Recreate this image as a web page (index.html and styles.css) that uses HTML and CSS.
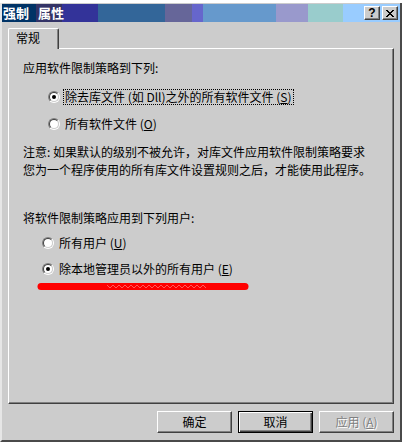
FILE: index.html
```html
<!DOCTYPE html>
<html lang="zh-CN">
<head>
<meta charset="utf-8">
<title>强制 属性</title>
<link rel="stylesheet" href="styles.css">
</head>
<body>
<div class="window">
  <div class="titlebar">
    <span class="title"><span class="t1">强制</span><span class="t2">属性</span></span>
    <div class="tbtns">
      <span class="tbtn help">?</span>
      <span class="tbtn close"><svg width="8" height="7" viewBox="0 0 8 7" shape-rendering="crispEdges"><path d="M0 0h2v1h-2zM6 0h2v1h-2zM1 1h2v1h-2zM5 1h2v1h-2zM2 2h4v1h-4zM3 3h2v1h-2zM2 4h4v1h-4zM1 5h2v1h-2zM5 5h2v1h-2zM0 6h2v1h-2zM6 6h2v1h-2z" fill="#000"/></svg></span>
    </div>
  </div>
  <div class="client">
    <div class="tabs"><div class="tab">常规</div></div>
    <div class="panel">
      <p class="text h1">应用软件限制策略到下列:</p>
      <div class="row g1 r1"><span class="radio checked"><span class="inner"></span></span><span class="lbl focus">除去库文件 (如 Dll)之外的所有软件文件 (<u>S</u>)</span></div>
      <div class="row g1 r2"><span class="radio"><span class="inner"></span></span><span class="lbl">所有软件文件 (<u>O</u>)</span></div>
      <div class="note">
        <p class="text nl">注意: 如果默认的级别不被允许，对库文件应用软件限制策略要求</p>
        <p class="text nl">您为一个程序使用的所有库文件设置规则之后，才能使用此程序。</p>
      </div>
      <p class="text h2">将软件限制策略应用到下列用户:</p>
      <div class="row g2 r3"><span class="radio"><span class="inner"></span></span><span class="lbl">所有用户 (<u>U</u>)</span></div>
      <div class="row g2 r4"><span class="radio checked"><span class="inner"></span></span><span class="lbl">除本地管理员以外的所有用户 (<u>E</u>)</span></div>
      <svg class="scribble" width="212" height="9" viewBox="0 0 212 9">
        <path d="M4 4.5 L208 4.5" stroke="#ff0000" stroke-width="7" stroke-linecap="round"/>
        <path d="M70 3 l3 3 l3 -3 l3 3 l3 -3 l3 3 l3 -3 l3 3 l3 -3 l3 3 l3 -3 l3 3 l3 -3 l3 3 l3 -3 l3 3 l3 -3 l3 3 l3 -3 l3 3 l3 -3 l3 3 l3 -3 l3 3 l3 -3 l3 3 l3 -3 l3 3 l3 -3 l3 3 l3 -3 l3 3 l3 -3 l3 3" stroke="#ff8080" stroke-width="0.7" fill="none"/>
      </svg>
    </div>
    <div class="buttons">
      <span class="btn">确定</span>
      <span class="btn default">取消</span>
      <span class="btn disabled">应用 (<u>A</u>)</span>
    </div>
  </div>
</div>
</body>
</html>
```
FILE: styles.css
```css
html, body {
  margin: 0;
  padding: 0;
  background: #ffffff;
}
body {
  font-family: "Noto Sans CJK SC", "Noto Sans", sans-serif;
  font-size: 12px;
  color: #000;
}
.window {
  margin-top: 3px;
  width: 402px;
  height: 439px;
  box-sizing: border-box;
  background: #cccccc;
  border-left: 2px solid #e6e6e6;
  border-right: 2px solid #4a4a4a;
  border-bottom: 2px solid #4a4a4a;
  padding-top: 1px;
  display: flex;
  flex-direction: column;
}
.titlebar {
  height: 18px;
  display: flex;
  align-items: center;
  justify-content: space-between;
  background: linear-gradient(to right,
    #003366 0, #003366 34px,
    #333366 34px, #333366 60px,
    #333399 60px, #333399 96px,
    #336699 96px, #336699 163px,
    #666699 163px, #666699 190px,
    #6666cc 190px, #6666cc 201px,
    #6699cc 201px, #6699cc 274px,
    #9999cc 274px, #9999cc 306px,
    #99cccc 306px, #99cccc 341px,
    #99ccff 341px, #99ccff 100%);
}
.title {
  display: flex;
  height: 18px;
  align-items: center;
  color: #fff;
  font-weight: bold;
  font-size: 13px;
  line-height: 18px;
}
.t1 {
  padding-left: 1px;
  width: 33px;
}
.t2 {
  padding-left: 2px;
}
.tbtns {
  display: flex;
  gap: 2px;
  padding-right: 2px;
}
.tbtn {
  width: 16px;
  height: 14px;
  box-sizing: border-box;
  background: #cccccc;
  border-style: solid;
  border-width: 1px;
  border-color: #ffffff #404040 #404040 #ffffff;
  box-shadow: inset -1px -1px #808080;
  display: flex;
  align-items: center;
  justify-content: center;
}
.help {
  font-family: "Liberation Sans", sans-serif;
  font-weight: bold;
  font-size: 12px;
  line-height: 12px;
}
.client {
  padding: 6px 0 0 6px;
  display: flex;
  flex-direction: column;
}
.tabs {
  display: flex;
  height: 20px;
}
.tab {
  position: relative;
  z-index: 1;
  width: 51px;
  height: 21px;
  box-sizing: border-box;
  background: #cccccc;
  border-top: 1px solid #ffffff;
  border-left: 1px solid #ffffff;
  border-right: 1px solid #404040;
  box-shadow: inset -1px 0 #808080;
  border-top-left-radius: 2px;
  border-top-right-radius: 2px;
  padding-left: 7px;
  line-height: 17px;
  font-size: 12px;
}
.panel {
  width: 386px;
  height: 356px;
  box-sizing: border-box;
  border-style: solid;
  border-width: 1px;
  border-color: #ffffff #404040 #404040 #ffffff;
  box-shadow: inset -1px -1px #808080;
  padding-left: 14px;
  display: flex;
  flex-direction: column;
  align-items: flex-start;
}
.text {
  margin: 0;
  line-height: 12px;
  white-space: nowrap;
}
.h1 { margin-top: 13px; }
.note {
  margin-top: 12px;
  display: flex;
  flex-direction: column;
}
.nl {
  line-height: 18px;
  height: 18px;
}
.h2 { margin-top: 33px; }
.row {
  display: flex;
  align-items: center;
  height: 14px;
  gap: 4px;
  white-space: nowrap;
  line-height: 12px;
}
.g1 { margin-left: 25px; }
.g2 { margin-left: 19px; }
.r1 { margin-top: 16px; }
.r2 { margin-top: 13px; }
.r3 { margin-top: 12px; }
.r4 { margin-top: 12px; }
.radio {
  width: 12px;
  height: 12px;
  box-sizing: border-box;
  border-radius: 50%;
  border-style: solid;
  border-width: 1px;
  border-color: #808080 #ffffff #ffffff #808080;
  display: flex;
}
.radio .inner {
  flex: 1;
  border-radius: 50%;
  border-style: solid;
  border-width: 1px;
  border-color: #404040 #cccccc #cccccc #404040;
  background: #ffffff;
  display: flex;
  align-items: center;
  justify-content: center;
}
.radio.checked .inner::after {
  content: "";
  width: 4px;
  height: 4px;
  border-radius: 50%;
  background: #000;
}
.lbl {
  padding: 1px;
}
.focus {
  outline: 1px dotted #000;
  outline-offset: 0;
}
u {
  text-decoration: underline;
}
.scribble {
  display: block;
  margin-top: 6px;
  margin-left: 14px;
}
.buttons {
  display: flex;
  justify-content: flex-end;
  gap: 6px;
  width: 386px;
  margin-top: 7px;
}
.btn {
  width: 75px;
  height: 22px;
  box-sizing: border-box;
  border-style: solid;
  border-width: 1px;
  border-color: #ffffff #404040 #404040 #ffffff;
  box-shadow: inset -1px -1px #808080;
  display: flex;
  align-items: center;
  justify-content: center;
  font-size: 12px;
  line-height: 12px;
}
.btn.default {
  border-color: #000;
  box-shadow: inset 1px 1px #ffffff, inset -1px -1px #404040, inset -2px -2px #808080;
}
.btn.disabled {
  color: #808080;
  text-shadow: 1px 1px #ffffff;
}
```
